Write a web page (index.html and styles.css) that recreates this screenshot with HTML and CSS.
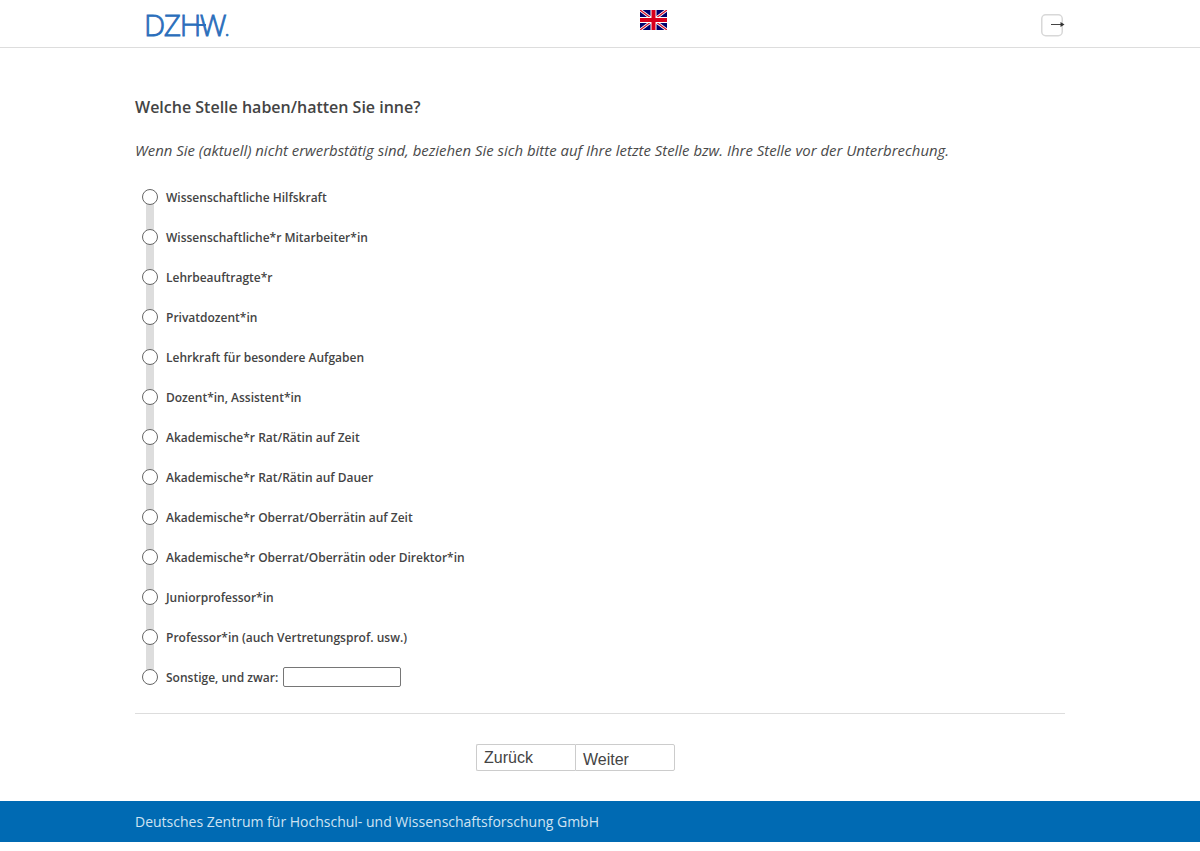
FILE: index.html
```html
<!DOCTYPE html>
<html lang="de">
<head>
<meta charset="utf-8">
<title>Welche Stelle haben/hatten Sie inne?</title>
<link rel="stylesheet" href="styles.css">
</head>
<body>
<header class="header">
  <div class="header-inner">
    <div class="logo">DZ<span class="logo-h">H</span>W<span class="logo-dot">.</span></div>
    <svg class="flag" width="27" height="20" viewBox="0 0 27 20" aria-label="English">
      <rect width="27" height="20" fill="#00006e"/>
      <path d="M0 0L27 20M27 0L0 20" stroke="#fff" stroke-width="3"/>
      <path d="M0 0L27 20M27 0L0 20" stroke="#d8102a" stroke-width="1.3"/>
      <path d="M13.5 0V20M0 10H27" stroke="#fff" stroke-width="6"/>
      <path d="M13.5 0V20M0 10H27" stroke="#d8001c" stroke-width="4"/>
    </svg>
    <svg class="exit" width="24" height="23" viewBox="0 0 24 23" aria-label="Beenden">
      <rect x="0.75" y="0.75" width="20.5" height="21" rx="4" fill="#fff" stroke="#d8d8d8" stroke-width="1.5"/>
      <path d="M10 10.5H20" stroke="#444" stroke-width="1"/>
      <path d="M19.5 8L23.5 10.5L19.5 13Z" fill="#333"/>
    </svg>
  </div>
</header>
<main class="main">
  <h1 class="question">Welche Stelle haben/hatten Sie inne?</h1>
  <p class="hint">Wenn Sie (aktuell) nicht erwerbstätig sind, beziehen Sie sich bitte auf Ihre letzte Stelle bzw. Ihre Stelle vor der Unterbrechung.</p>
  <ul class="options">
    <li class="option"><span class="radio"></span><span>Wissenschaftliche Hilfskraft</span></li>
    <li class="option"><span class="radio"></span><span>Wissenschaftliche*r Mitarbeiter*in</span></li>
    <li class="option"><span class="radio"></span><span>Lehrbeauftragte*r</span></li>
    <li class="option"><span class="radio"></span><span>Privatdozent*in</span></li>
    <li class="option"><span class="radio"></span><span>Lehrkraft für besondere Aufgaben</span></li>
    <li class="option"><span class="radio"></span><span>Dozent*in, Assistent*in</span></li>
    <li class="option"><span class="radio"></span><span>Akademische*r Rat/Rätin auf Zeit</span></li>
    <li class="option"><span class="radio"></span><span>Akademische*r Rat/Rätin auf Dauer</span></li>
    <li class="option"><span class="radio"></span><span>Akademische*r Oberrat/Oberrätin auf Zeit</span></li>
    <li class="option"><span class="radio"></span><span>Akademische*r Oberrat/Oberrätin oder Direktor*in</span></li>
    <li class="option"><span class="radio"></span><span>Juniorprofessor*in</span></li>
    <li class="option"><span class="radio"></span><span>Professor*in (auch Vertretungsprof. usw.)</span></li>
    <li class="option"><span class="radio"></span><span>Sonstige, und zwar:</span><input class="other" type="text" aria-label="Sonstige"></li>
  </ul>
  <hr class="rule">
  <div class="nav">
    <button class="btn btn-back" type="button">Zurück</button><button class="btn btn-next" type="button">Weiter</button>
  </div>
</main>
<footer class="footer">
  <div class="footer-inner">Deutsches Zentrum für Hochschul- und Wissenschaftsforschung GmbH</div>
</footer>
</body>
</html>
```
FILE: styles.css
```css
* { box-sizing: border-box; }
html, body { margin: 0; padding: 0; background: #fff; }
body { font-family: "Open Sans", sans-serif; color: #444; height: 851px; overflow: hidden; }

.header { height: 48px; border-bottom: 1px solid #ddd; }
.header-inner { width: 930px; margin: 0 auto; position: relative; height: 47px; }
.logo { position: absolute; left: 9px; top: 4px; font-family: "Open Sans", sans-serif; font-size: 30px; line-height: 41px; color: #2a6ebb; letter-spacing: -1.4px; font-weight: 300; -webkit-text-stroke: 0.8px #2a6ebb; }
.logo-h { position: relative; display: inline-block; }
.logo-h::after { content: ""; position: absolute; left: 16px; top: 20px; width: 10px; height: 2px; background: #2a6ebb; }
.logo-dot { font-size: 14px; letter-spacing: 0; font-weight: 400; }
.flag { position: absolute; left: 505px; top: 10px; }
.exit { position: absolute; left: 906px; top: 14px; }

.main { width: 930px; margin: 0 auto; }
.question { margin: 0; padding-top: 48px; font-size: 16px; line-height: 22px; font-weight: 600; color: #444; }
.hint { margin: 21px 0 0; font-size: 14.92px; line-height: 22px; font-style: italic; font-weight: 400; color: #4a4a4a; white-space: nowrap; }

.options { list-style: none; margin: 16px 0 0; padding: 0 0 0 7px; }
.option { position: relative; display: flex; align-items: center; height: 40px; font-size: 12px; font-weight: 600; color: #444; }
.option:not(:last-child)::before { content: ""; position: absolute; left: 4px; top: 20px; width: 8px; height: 40px; background: #ddd; }
.radio { position: relative; flex: none; width: 16px; height: 16px; margin-right: 8px; border: 1px solid #666; border-radius: 50%; background: #fff; }
.other { width: 118px; height: 20px; margin: 0 0 0 5px; border: 1px solid #767676; border-radius: 2px; background: #fff; padding: 0; }

.rule { border: 0; border-top: 1px solid #ddd; margin: 16px 0 0; }
.nav { display: flex; justify-content: center; margin-top: 30px; padding-right: 49px; }
.btn { height: 27px; background: #fff; border: 1px solid #ccc; font-family: "Liberation Sans", sans-serif; font-size: 16px; color: #444; text-align: left; padding: 0 0 0 7px; }
.btn-back { width: 99px; border-radius: 2px 0 0 2px; border-right: 0; }
.btn-next { width: 100px; border-radius: 0 2px 2px 0; padding-top: 5px; }

.footer { margin-top: 30px; height: 41px; background: #006ab3; }
.footer-inner { width: 930px; margin: 0 auto; font-size: 14px; line-height: 41px; color: #cfe3f2; }
```
